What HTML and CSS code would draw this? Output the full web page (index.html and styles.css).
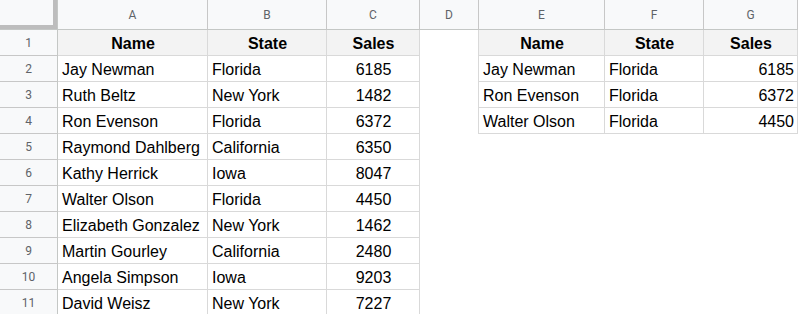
FILE: index.html
```html
<!DOCTYPE html>
<html>
<head>
<meta charset="utf-8">
<link rel="stylesheet" href="styles.css">
</head>
<body>
<div class="sheet">
  <div class="corner"></div>
  <div class="colhead">A</div>
  <div class="colhead">B</div>
  <div class="colhead">C</div>
  <div class="colhead">D</div>
  <div class="colhead">E</div>
  <div class="colhead">F</div>
  <div class="colhead last">G</div>

  <div class="rowhead">1</div>
  <div class="cell hdr">Name</div>
  <div class="cell hdr">State</div>
  <div class="cell hdr">Sales</div>
  <div class="cell gap edge"></div>
  <div class="cell hdr">Name</div>
  <div class="cell hdr">State</div>
  <div class="cell hdr">Sales</div>

  <div class="rowhead">2</div>
  <div class="cell">Jay Newman</div>
  <div class="cell">Florida</div>
  <div class="cell num">6185</div>
  <div class="cell gap edge"></div>
  <div class="cell">Jay Newman</div>
  <div class="cell">Florida</div>
  <div class="cell right">6185</div>

  <div class="rowhead">3</div>
  <div class="cell">Ruth Beltz</div>
  <div class="cell">New York</div>
  <div class="cell num">1482</div>
  <div class="cell gap edge"></div>
  <div class="cell">Ron Evenson</div>
  <div class="cell">Florida</div>
  <div class="cell right">6372</div>

  <div class="rowhead">4</div>
  <div class="cell">Ron Evenson</div>
  <div class="cell">Florida</div>
  <div class="cell num">6372</div>
  <div class="cell gap edge"></div>
  <div class="cell">Walter Olson</div>
  <div class="cell">Florida</div>
  <div class="cell right">4450</div>

  <div class="rowhead">5</div>
  <div class="cell">Raymond Dahlberg</div>
  <div class="cell">California</div>
  <div class="cell num">6350</div>
  <div class="cell gap"></div>
  <div class="cell blank"></div>
  <div class="cell blank"></div>
  <div class="cell blank"></div>

  <div class="rowhead">6</div>
  <div class="cell">Kathy Herrick</div>
  <div class="cell">Iowa</div>
  <div class="cell num">8047</div>
  <div class="cell gap"></div>
  <div class="cell blank"></div>
  <div class="cell blank"></div>
  <div class="cell blank"></div>

  <div class="rowhead">7</div>
  <div class="cell">Walter Olson</div>
  <div class="cell">Florida</div>
  <div class="cell num">4450</div>
  <div class="cell gap"></div>
  <div class="cell blank"></div>
  <div class="cell blank"></div>
  <div class="cell blank"></div>

  <div class="rowhead">8</div>
  <div class="cell">Elizabeth Gonzalez</div>
  <div class="cell">New York</div>
  <div class="cell num">1462</div>
  <div class="cell gap"></div>
  <div class="cell blank"></div>
  <div class="cell blank"></div>
  <div class="cell blank"></div>

  <div class="rowhead">9</div>
  <div class="cell">Martin Gourley</div>
  <div class="cell">California</div>
  <div class="cell num">2480</div>
  <div class="cell gap"></div>
  <div class="cell blank"></div>
  <div class="cell blank"></div>
  <div class="cell blank"></div>

  <div class="rowhead">10</div>
  <div class="cell">Angela Simpson</div>
  <div class="cell">Iowa</div>
  <div class="cell num">9203</div>
  <div class="cell gap"></div>
  <div class="cell blank"></div>
  <div class="cell blank"></div>
  <div class="cell blank"></div>

  <div class="rowhead">11</div>
  <div class="cell">David Weisz</div>
  <div class="cell">New York</div>
  <div class="cell num">7227</div>
  <div class="cell gap"></div>
  <div class="cell blank"></div>
  <div class="cell blank"></div>
  <div class="cell blank"></div>
</div>
</body>
</html>
```

FILE: styles.css
```css
html, body {
  margin: 0;
  padding: 0;
  background: #ffffff;
  overflow: hidden;
}

.sheet {
  display: grid;
  grid-template-columns: 58px 150px 119px 93px 59px 126px 99px 94px;
  grid-template-rows: 30px repeat(11, 26px);
  font-family: "Liberation Sans", Arial, sans-serif;
  font-size: 16px;
  color: #000000;
}

.corner {
  background: #f8f9fa;
  border-right: 1px solid #c4c7c5;
  border-bottom: 1px solid #c4c7c5;
  box-shadow: inset -4px -4px 0 #bdbdbd;
  box-sizing: border-box;
}

.colhead {
  background: #f8f9fa;
  border-right: 1px solid #c7c7c7;
  border-bottom: 1px solid #c4c7c5;
  box-sizing: border-box;
  display: flex;
  align-items: center;
  justify-content: center;
  font-family: Roboto, "Liberation Sans", Arial, sans-serif;
  font-size: 12px;
  color: #5f6368;
  padding-top: 1px;
}

.rowhead {
  background: #f8f9fa;
  border-right: 1px solid #c4c7c5;
  border-bottom: 1px solid #c7c7c7;
  box-sizing: border-box;
  display: flex;
  align-items: center;
  justify-content: center;
  font-family: Roboto, "Liberation Sans", Arial, sans-serif;
  font-size: 12px;
  color: #5f6368;
  padding-top: 1px;
}

.cell {
  border-right: 1px solid #d9d9d9;
  border-bottom: 1px solid #d9d9d9;
  box-sizing: border-box;
  display: flex;
  align-items: center;
  padding: 2px 3px 0 4px;
  white-space: nowrap;
  overflow: hidden;
}

.hdr {
  background: #f3f3f3;
  font-weight: bold;
  justify-content: center;
}

.num {
  justify-content: center;
}

.right {
  justify-content: flex-end;
}

.gap {
  border-bottom: none;
  border-right: none;
}

.gap.edge {
  border-right: 1px solid #d9d9d9;
}

.blank {
  border: none;
}
```
